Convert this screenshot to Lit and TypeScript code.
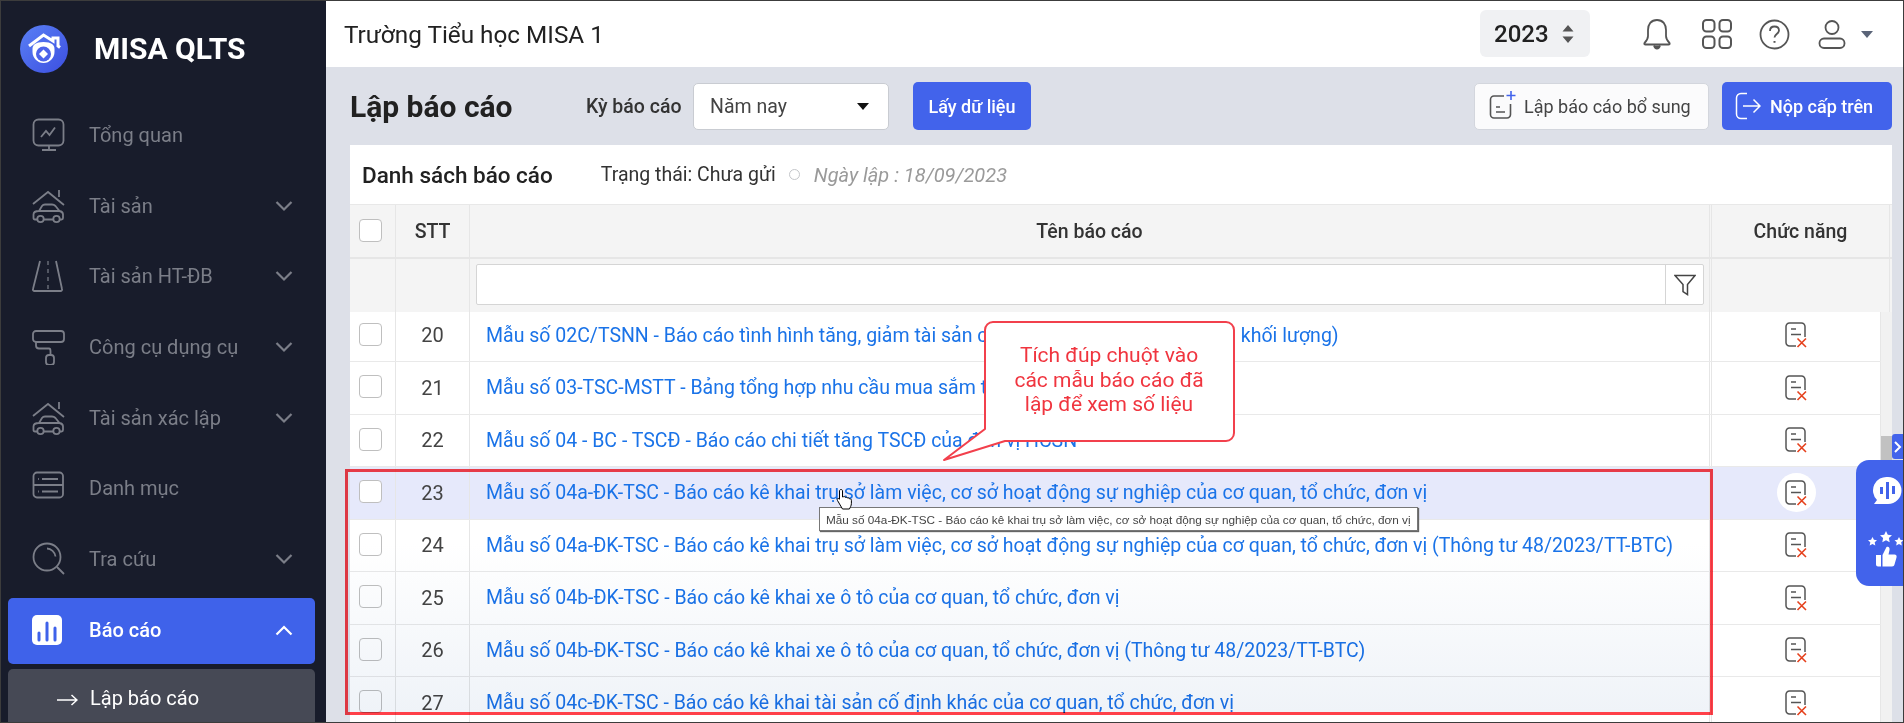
import { LitElement, html, css, svg } from "lit";
import { customElement } from "lit/decorators.js";

const reportIcon = html`<svg class="ri" viewBox="0 0 22 26" fill="none"><path d="M11 24H4.500A3.500 3.500 0 0 1 1 20.500V4.500A3.500 3.500 0 0 1 4.500 1H16.500A3.500 3.500 0 0 1 20 4.500V15" stroke="#555" stroke-width="1.500"/><path d="M6 7h5M6 12.500h10" stroke="#555" stroke-width="1.500"/><path d="M12.500 16.500l8.500 8.500M21 16.500l-8.500 8.500" stroke="#e5401c" stroke-width="1.600"/></svg>`;

const chevron = (up = false) => html`<svg class="chev" viewBox="0 0 18 12" fill="none"><path d="${up ? "M1.500 10.500L9 3l7.500 7.500" : "M1.500 2L9 9.500 16.500 2"}" stroke="currentColor" stroke-width="2.200"/></svg>`;

const navIcons: Record<string, any> = {
  monitor: svg`<rect x="1.500" y="1.500" width="30" height="26" rx="5"/><path d="M17 27.500v4M10 32h14"/><path d="M9 19l5-6 3.500 4 5.500-7.500"/>`,
  house: svg`<path d="M1 15L16 3l16 13M27 8V1"/><path d="M7 22l3-5c.7-1 1.500-1.500 3-1.500h7c1.500 0 2.500.5 3.500 1.500l4 5c2 .4 3.500 1.500 3.500 3.500v3.500c0 1-.7 1.500-1.500 1.500H3c-1 0-1.500-.7-1.500-1.500v-3.500c0-2 2-3.500 5.500-3.500zM7 22h21"/><circle cx="8.500" cy="30" r="3.200" fill="#181c2b"/><circle cx="24.500" cy="30" r="3.200" fill="#181c2b"/>`,
  road: svg`<path d="M8 2L1 30a1.500 1.500 0 0 0 1.500 2h26a1.500 1.500 0 0 0 1.500-2L24 2"/><path d="M16 2v4M16 10v4M16 18v4M16 26v4" stroke-width="1.200"/>`,
  roller: svg`<rect x="1" y="1" width="31" height="11" rx="3"/><path d="M4 12v3.500c0 2 1 3 3 3h10c1.500 0 1.500 1 1.500 2.500v4"/><rect x="14" y="25" width="8" height="10" rx="3"/>`,
  list: svg`<rect x="1.500" y="1.500" width="29.500" height="25" rx="3.500"/><path d="M1.500 14h29.500M10 8h16M10 20.500h16"/><path d="M6 8h.8M6 20.500h.8"/>`,
  search: svg`<circle cx="15" cy="15" r="13.500"/><path d="M15 6.500c4 0 8 3.500 8.500 8M25 25l7 7"/>`,
};

const rows: [number, string][] = [
  [20, "Mẫu số 02C/TSNN - Báo cáo tình hình tăng, giảm tài sản cố định (theo hiện vật, giá tiền khối lượng)"],
  [21, "Mẫu số 03-TSC-MSTT - Bảng tổng hợp nhu cầu mua sắm tài sản cố định"],
  [22, "Mẫu số 04 - BC - TSCĐ - Báo cáo chi tiết tăng TSCĐ của đơn vị HCSN"],
  [23, "Mẫu số 04a-ĐK-TSC - Báo cáo kê khai trụ sở làm việc, cơ sở hoạt động sự nghiệp của cơ quan, tổ chức, đơn vị"],
  [24, "Mẫu số 04a-ĐK-TSC - Báo cáo kê khai trụ sở làm việc, cơ sở hoạt động sự nghiệp của cơ quan, tổ chức, đơn vị (Thông tư 48/2023/TT-BTC)"],
  [25, "Mẫu số 04b-ĐK-TSC - Báo cáo kê khai xe ô tô của cơ quan, tổ chức, đơn vị"],
  [26, "Mẫu số 04b-ĐK-TSC - Báo cáo kê khai xe ô tô của cơ quan, tổ chức, đơn vị (Thông tư 48/2023/TT-BTC)"],
  [27, "Mẫu số 04c-ĐK-TSC - Báo cáo kê khai tài sản cố định khác của cơ quan, tổ chức, đơn vị"],
];

const nav: [string, string, boolean][] = [
  ["monitor", "Tổng quan", false],
  ["house", "Tài sản", true],
  ["road", "Tài sản HT-ĐB", true],
  ["roller", "Công cụ dụng cụ", true],
  ["house", "Tài sản xác lập", true],
  ["list", "Danh mục", false],
  ["search", "Tra cứu", true],
];

@customElement("app-root")
export class AppRoot extends LitElement {
  static styles = css`
    :host {
      display: block;
      width: 1904px;
      height: 723px;
      box-sizing: border-box;
      border: 1px solid #3c3c3c;
      overflow: hidden;
      position: relative;
      font-family: Roboto, sans-serif;
      color: #212121;
    }
    .app { display: grid; grid-template-columns: 325px 1fr; height: 100%; }
    .side { background: #181c2b; display: flex; flex-direction: column; overflow: hidden; }
    .brand { height: 96px; margin-bottom: 3px; flex: none; display: flex; align-items: center; padding-left: 19px; gap: 26px; }
    .logo { width: 48px; height: 48px; flex: none; }
    .brand b { color: #fff; font-size: 30px; font-weight: 700; letter-spacing: 0; margin-top: -2px; }
    .item { height: 70.600px; flex: none; display: flex; align-items: center; padding-left: 31px; padding-right: 33px; color: #7b7e88; font-size: 20px; }
    .item svg.ni { width: 34px; height: 36px; flex: none; fill: none; stroke: #7b7e88; stroke-width: 1.800; margin-right: 23px; }
    .item span { flex: 1; }
    .chev { width: 18px; height: 12px; flex: none; display: block; }
    .active { height: 66px; box-sizing: border-box; margin: 4px 11px 0 7px; padding: 0 22px 3px 24px; background: #3f62ea; border-radius: 5px; color: #fff; font-weight: 500; }
    .active svg.bars { width: 30px; height: 30px; flex: none; margin-right: 27px; }
    .sub { margin: 5px 11px 0 7px; flex: 1; background: #464955; border-radius: 5px 5px 0 0; color: #fff; display: flex; align-items: flex-start; padding: 17px 0 0 49px; font-size: 20px; gap: 12px; }
    .sub svg { width: 21px; height: 12px; margin-top: 8px; flex: none; }

    .main { display: flex; flex-direction: column; min-width: 0; background: #dde0e8; }
    .top { height: 66px; flex: none; background: #fff; display: flex; align-items: center; padding-left: 18px; }
    .school { font-size: 24.300px; color: #212121; flex: 1; }
    .year { width: 110px; height: 47px; box-sizing: border-box; background: #f0f1f3; border-radius: 6px; display: flex; align-items: center; padding-left: 14px; font-size: 24px; font-weight: 500; gap: 13px; margin-right: 53px; margin-top: -1px; }
    .year svg { width: 12px; height: 20px; }
    .tic { flex: none; display: block; }
    .bell { width: 28px; height: 32px; margin-right: 31px; }
    .apps { width: 30px; height: 30px; margin-right: 27px; }
    .help { width: 31px; height: 31px; margin-right: 28px; }
    .user { width: 28px; height: 30px; margin-right: 15px; }
    .caret { width: 12px; height: 7px; margin-right: 30px; }

    .bar { height: 78px; flex: none; display: flex; align-items: center; padding: 0 11px 0 24px; }
    .bar h1 { margin: 0 73px 0 0; font-size: 30px; font-weight: 700; white-space: nowrap; width: 163px; flex: none; }
    .kbc { font-size: 19.500px; font-weight: 500; margin-right: 11px; white-space: nowrap; color: #333; width: 96px; flex: none; }
    .select { width: 196px; height: 47px; box-sizing: border-box; background: #fff; border: 1px solid #c9ccd2; border-radius: 5px; display: flex; align-items: center; justify-content: space-between; padding: 0 19px 0 16px; font-size: 19.500px; color: #444; margin-right: 24px; }
    .select i { width: 0; height: 0; border: 6px solid transparent; border-top: 7px solid #111; border-bottom: 0; }
    .btn { height: 48px; box-sizing: border-box; border-radius: 5px; display: flex; align-items: center; background: #4263eb; color: #fff; font-weight: 500; font-size: 18px; white-space: nowrap; }
    .get { width: 118px; justify-content: center; }
    .add { width: 235px; height: 47px; margin-left: auto; background: #fbfbfc; border: 1px solid #d3d6dd; color: #444; font-weight: 400; font-size: 18px; padding-left: 14px; gap: 8px; }
    .add svg { width: 27px; height: 30px; flex: none; margin-top: -3px; }
    .send { width: 170px; margin-left: 13px; font-size: 18px; padding-left: 13px; gap: 9px; }
    .send svg { width: 26px; height: 28px; flex: none; }

    .card { flex: 1; min-height: 0; background: #fff; margin-right: 11px; margin-left: 24px; display: flex; flex-direction: column; overflow: hidden; }
    .title { height: 60px; flex: none; box-sizing: border-box; display: flex; align-items: center; padding-left: 12px; border-bottom: 1px solid #e8e8e8; font-size: 19.500px; color: #333; }
    .title strong { font-size: 22.500px; font-weight: 500; color: #212121; margin-right: 48px; }
    .title .dot { width: 11px; height: 11px; box-sizing: border-box; border: 1.500px solid #c4c6ca; border-radius: 50%; margin: 0 14px 0 13px; }
    .title em { color: #9a9a9a; font-size: 20px; }

    .grid { display: grid; grid-template-columns: 46px 74px 1240px 1fr; }
    .head { height: 54px; flex: none; box-sizing: border-box; background: #f4f4f4; border-bottom: 2px solid #e6e6e6; font-weight: 500; font-size: 19.500px; color: #333; padding-right: 2px; }
    .filter { height: 53px; flex: none; box-sizing: border-box; background: #f4f4f4; padding-right: 2px; }
    .c { display: flex; align-items: center; justify-content: center; min-width: 0; box-sizing: border-box; border-right: 1px solid #e6e6e6; }
    .c3 { border-right: 1px solid #e6e6e6; }
    .c4 { border-left: 1px solid #e6e6e6; margin-left: 1px; }
    .cb { width: 23px; height: 23px; box-sizing: border-box; background: #fff; border: 1px solid #bfbfbf; border-radius: 4px; display: block; margin: -2px 5px 0 0; }
    .input { flex: 1; height: 41px; margin: 5px 5px 0 6px; box-sizing: border-box; background: #fff; border: 1px solid #d5d5d5; border-radius: 2px; display: flex; justify-content: flex-end; align-self: flex-start; }
    .fbtn { width: 37px; border-left: 1px solid #d5d5d5; display: flex; align-items: center; justify-content: center; }
    .fbtn svg { width: 22px; height: 22px; }

    .body { flex: 1; min-height: 0; display: flex; overflow: hidden; }
    .rows { width: 1531px; flex: none; overflow: hidden; }
    .rows-in { margin-top: -2.500px; }
    .row { height: 52.500px; box-sizing: border-box; border-bottom: 1.500px solid #e9e9e9; background: #fff; font-size: 19.500px; }
    .row.hov { background: #e6e9fb; }
    .num { font-size: 20px; color: #444; }
    .link { justify-content: flex-start; padding-left: 16px; color: #1a73e8; white-space: nowrap; overflow: hidden; }
    .ri { width: 22px; height: 26px; display: block; position: relative; }
    .round { width: 39px; height: 39px; border-radius: 50%; display: flex; align-items: center; justify-content: center; }
    .hov .round { background: #fff; }
    .sb { flex: 1; background: #f1f1f1; position: relative; }
    .thumb { position: absolute; left: 0; right: 0; top: 124px; height: 60px; background: #c1c1c1; }
    .hs { height: 10px; flex: none; background: #f1f1f1; border-top: 1px solid #d8d8d8; }

    .red { position: absolute; left: 344px; top: 468px; width: 1368px; height: 246px; box-sizing: border-box; border: 3px solid #ff4049; background: linear-gradient(to bottom, #fff 30%, #eff3f8 100%); mix-blend-mode: multiply; pointer-events: none; }
    .tail { position: absolute; left: 942px; top: 320px; width: 296px; height: 142px; }
    .callout { position: absolute; left: 983px; top: 319px; width: 250px; height: 120px; box-sizing: border-box; display: flex; align-items: center; justify-content: center; text-align: center; color: #f0353f; font-size: 21px; line-height: 24.500px; }
    .tip { position: absolute; left: 818px; top: 506px; height: 22px; padding: 0 6px; background: #fff; border: 1px solid #777; box-shadow: 1px 1px 1px #666; display: flex; align-items: center; font-size: 11.750px; color: #444; white-space: nowrap; font-family: "Liberation Sans", sans-serif; }
    .hand { position: absolute; left: 835px; top: 487px; width: 18px; height: 22px; }

    .wtab { position: absolute; left: 1891px; top: 433px; width: 12px; height: 25px; background: #4263eb; border-radius: 3px 0 0 3px; display: flex; align-items: center; padding-left: 2px; box-sizing: border-box; }
    .wtab svg { width: 10px; height: 12px; }
    .widget { position: absolute; left: 1855px; top: 459px; width: 48px; height: 126px; background: #4263eb; border-radius: 13px 0 0 13px; display: flex; flex-direction: column; align-items: flex-start; padding: 16px 0 0 12px; box-sizing: border-box; gap: 25px; }
    .widget svg { display: block; flex: none; }
    .widget .chat { margin-left: 5px; }
  `;

  render() {
    return html`<div class="app">
      <aside class="side">
        <div class="brand">
          <svg class="logo" viewBox="0 0 48 48"><defs><linearGradient id="lg" x1="0" y1="0" x2="1" y2="1"><stop offset="0" stop-color="#5a80f5"/><stop offset="1" stop-color="#3c4fe0"/></linearGradient></defs><circle cx="24" cy="24" r="24" fill="url(#lg)"/><path d="M9 21L23.500 10 33 16v-3h5v8l2 1.500" fill="none" stroke="#fff" stroke-width="3"/><path d="M12.500 24c0-4 3-7 11-7s11 3 11 7v3c0 6-5 11-11 11s-11-5-11-11z" fill="#fff"/><circle cx="23.500" cy="29" r="7.500" fill="#4d63ea"/><path d="M23.500 24.500l4.500 4.500-4.500 4.500-4.500-4.500z" fill="#fff"/></svg>
          <b>MISA QLTS</b>
        </div>
        ${nav.map(([ic, label, ch]) => html`<div class="item"><svg class="ni" viewBox="0 -1 34 36">${navIcons[ic]}</svg><span>${label}</span>${ch ? chevron() : ""}</div>`)}
        <div class="item active"><svg class="bars" viewBox="0 0 30 30"><rect width="30" height="30" rx="5" fill="#fff"/><path d="M7 18v7M15 8v17M23 13v12" stroke="#3f62ea" stroke-width="3" stroke-linecap="round"/></svg><span>Báo cáo</span>${chevron(true)}</div>
        <div class="sub"><svg viewBox="0 0 21 12" fill="none"><path d="M0 6h20M14.500 1l5.500 5-5.500 5" stroke="#fff" stroke-width="1.500"/></svg><span>Lập báo cáo</span></div>
      </aside>
      <main class="main">
        <header class="top">
          <div class="school">Trường Tiểu học MISA 1</div>
          <div class="year"><span>2023</span><svg viewBox="0 0 12 20"><path d="M6 1l5.500 6.500H.5zM6 19L.5 12.500h11z" fill="#555"/></svg></div>
          <svg class="tic bell" viewBox="0 0 28 32" fill="none" stroke="#555" stroke-width="1.800"><path d="M14 2c-6 0-9 4.500-9 10v6c0 3-1.500 5-3.500 7 -.5 1 0 1.500 1 1.500h23c1 0 1.500-.5 1-1.500-2-2-3.500-4-3.500-7v-6c0-5.500-3-10-9-10z"/><path d="M11 27.500c.5 2 1.500 3 3 3s2.500-1 3-3" fill="#555"/></svg>
          <svg class="tic apps" viewBox="0 0 30 30" fill="none" stroke="#555" stroke-width="2"><rect x="1" y="1" width="11.500" height="11.500" rx="3.500"/><rect x="17.500" y="1" width="11.500" height="11.500" rx="3.500"/><rect x="1" y="17.500" width="11.500" height="11.500" rx="3.500"/><rect x="17.500" y="17.500" width="11.500" height="11.500" rx="3.500"/></svg>
          <svg class="tic help" viewBox="0 0 31 31" fill="none" stroke="#555" stroke-width="1.800"><circle cx="15.500" cy="15.500" r="14"/><path d="M11 12c0-3 2-4.500 4.500-4.500s4.500 1.500 4.500 4c0 3.500-4.500 3.500-4.500 7"/><path d="M15.500 22v1.800" stroke-width="2"/></svg>
          <svg class="tic user" viewBox="0 0 28 30" fill="none" stroke="#555" stroke-width="1.800"><circle cx="14" cy="8.500" r="6.500"/><rect x="1.500" y="19.500" width="25" height="9.500" rx="4.500"/></svg>
          <svg class="tic caret" viewBox="0 0 12 7"><path d="M0 0h12L6 7z" fill="#5a6478"/></svg>
        </header>
        <div class="bar">
          <h1>Lập báo cáo</h1>
          <div class="kbc">Kỳ báo cáo</div>
          <div class="select"><span>Năm nay</span><i></i></div>
          <div class="btn get">Lấy dữ liệu</div>
          <div class="btn add"><svg viewBox="0 0 27 30" fill="none"><path d="M15 6H5a3.500 3.500 0 0 0-3.500 3.500v15A3.500 3.500 0 0 0 5 28h13a3.500 3.500 0 0 0 3.500-3.500V14" stroke="#555" stroke-width="1.600"/><path d="M7 17h4M7 22h9" stroke="#555" stroke-width="1.600"/><path d="M22 1v9M17.500 5.500h9" stroke="#4263eb" stroke-width="1.600"/></svg><span>Lập báo cáo bổ sung</span></div>
          <div class="btn send"><svg viewBox="0 0 26 28" fill="none" stroke="#fff" stroke-width="1.500"><path d="M12 1.500H6A4.500 4.500 0 0 0 1.500 6v16A4.500 4.500 0 0 0 6 26.500h6"/><path d="M8 14h17M18.500 7.500L25 14l-6.500 6.500"/></svg><span>Nộp cấp trên</span></div>
        </div>
        <section class="card">
          <div class="title"><strong>Danh sách báo cáo</strong><span>Trạng thái: Chưa gửi</span><i class="dot"></i><em>Ngày lập : 18/09/2023</em></div>
          <div class="grid head">
            <div class="c"><i class="cb"></i></div><div class="c">STT</div><div class="c c3">Tên báo cáo</div><div class="c c4">Chức năng</div>
          </div>
          <div class="grid filter">
            <div class="c"></div><div class="c"></div>
            <div class="c c3"><div class="input"><div class="fbtn"><svg viewBox="0 0 22 22" fill="none" stroke="#444" stroke-width="1.500"><path d="M1 1.500h20l-7.500 9v10L9 17.500v-7z"/></svg></div></div></div>
            <div class="c c4"></div>
          </div>
          <div class="body">
            <div class="rows"><div class="rows-in">
              ${rows.map(([n, t]) => html`<div class="grid row ${n === 23 ? "hov" : ""}">
                <div class="c"><i class="cb"></i></div>
                <div class="c num">${n}</div>
                <div class="c c3 link">${t}</div>
                <div class="c c4"><div class="round">${reportIcon}</div></div>
              </div>`)}
            </div></div>
            <div class="sb"><div class="thumb"></div></div>
          </div>
          <div class="hs"></div>
        </section>
      </main>
    </div>
    <div class="red"></div>
    <svg class="tail" viewBox="0 0 296 142" fill="#fff" stroke="#f2404c" stroke-width="2"><path d="M50 1H283a8 8 0 0 1 8 8V112a8 8 0 0 1-8 8H62L1 139 42 108V9a8 8 0 0 1 8-8z" stroke-linejoin="round"/></svg>
    <div class="callout"><span>Tích đúp chuột vào<br />các mẫu báo cáo đã<br />lập để xem số liệu</span></div>
    <div class="tip">Mẫu số 04a-ĐK-TSC - Báo cáo kê khai trụ sở làm việc, cơ sở hoạt động sự nghiệp của cơ quan, tổ chức, đơn vị</div>
    <svg class="hand" viewBox="0 0 18 22"><path d="M5 1.500c1 0 1.500.7 1.500 1.500v6l1-.3c1-.3 1.500 0 1.800.7.800-.4 1.700-.2 2 .6.900-.4 1.800-.1 2.100.8 1-.2 2 .3 2 1.500v3c0 2.500-1.300 4.200-2 5.700H6.500L1.500 12.500c-.7-1-.2-2 .7-2 .6 0 1 .3 1.300.7V3c0-.8.600-1.500 1.500-1.500z" fill="#fff" stroke="#000" stroke-width="1"/></svg>
    <div class="wtab"><svg viewBox="0 0 10 12" fill="none" stroke="#fff" stroke-width="2"><path d="M1 1l5 5-5 5"/></svg></div>
    <div class="widget">
      <svg class="chat" width="29" height="30" viewBox="0 0 29 30"><path d="M15 1a13.500 13.500 0 0 1 0 27H1l3-4A13.500 13.500 0 0 1 15 1z" fill="#fff"/><path d="M8.500 11v7M14.500 6v17M20.500 10v8" stroke="#4263eb" stroke-width="3"/></svg>
      <svg width="36" height="36" viewBox="0 0 36 36"><path d="M18 0l1.800 3.800 4.200.5-3.100 2.800.8 4.100L18 9.200l-3.700 2 .8-4.100L12 4.300l4.200-.5zM4.500 6l1.400 2.800 3.100.4-2.300 2.100.6 3.100-2.800-1.500-2.800 1.500.6-3.100L0 9.200l3.100-.4zM31 6l1.400 2.800 3.100.4-2.300 2.100.6 3.100-2.800-1.500-2.800 1.500.6-3.100-2.300-2.100 3.100-.4z" fill="#fff"/><path d="M8 24h5v11.500h-3a2 2 0 0 1-2-2zM14.500 24l4-8c2-1 3.500.5 3 3l-1 4.500h6c1.500 0 2.500 1 2 3l-2 7c-.3 1.300-1 2-2.500 2H14.500z" fill="#fff"/></svg>
    </div>`;
  }
}
